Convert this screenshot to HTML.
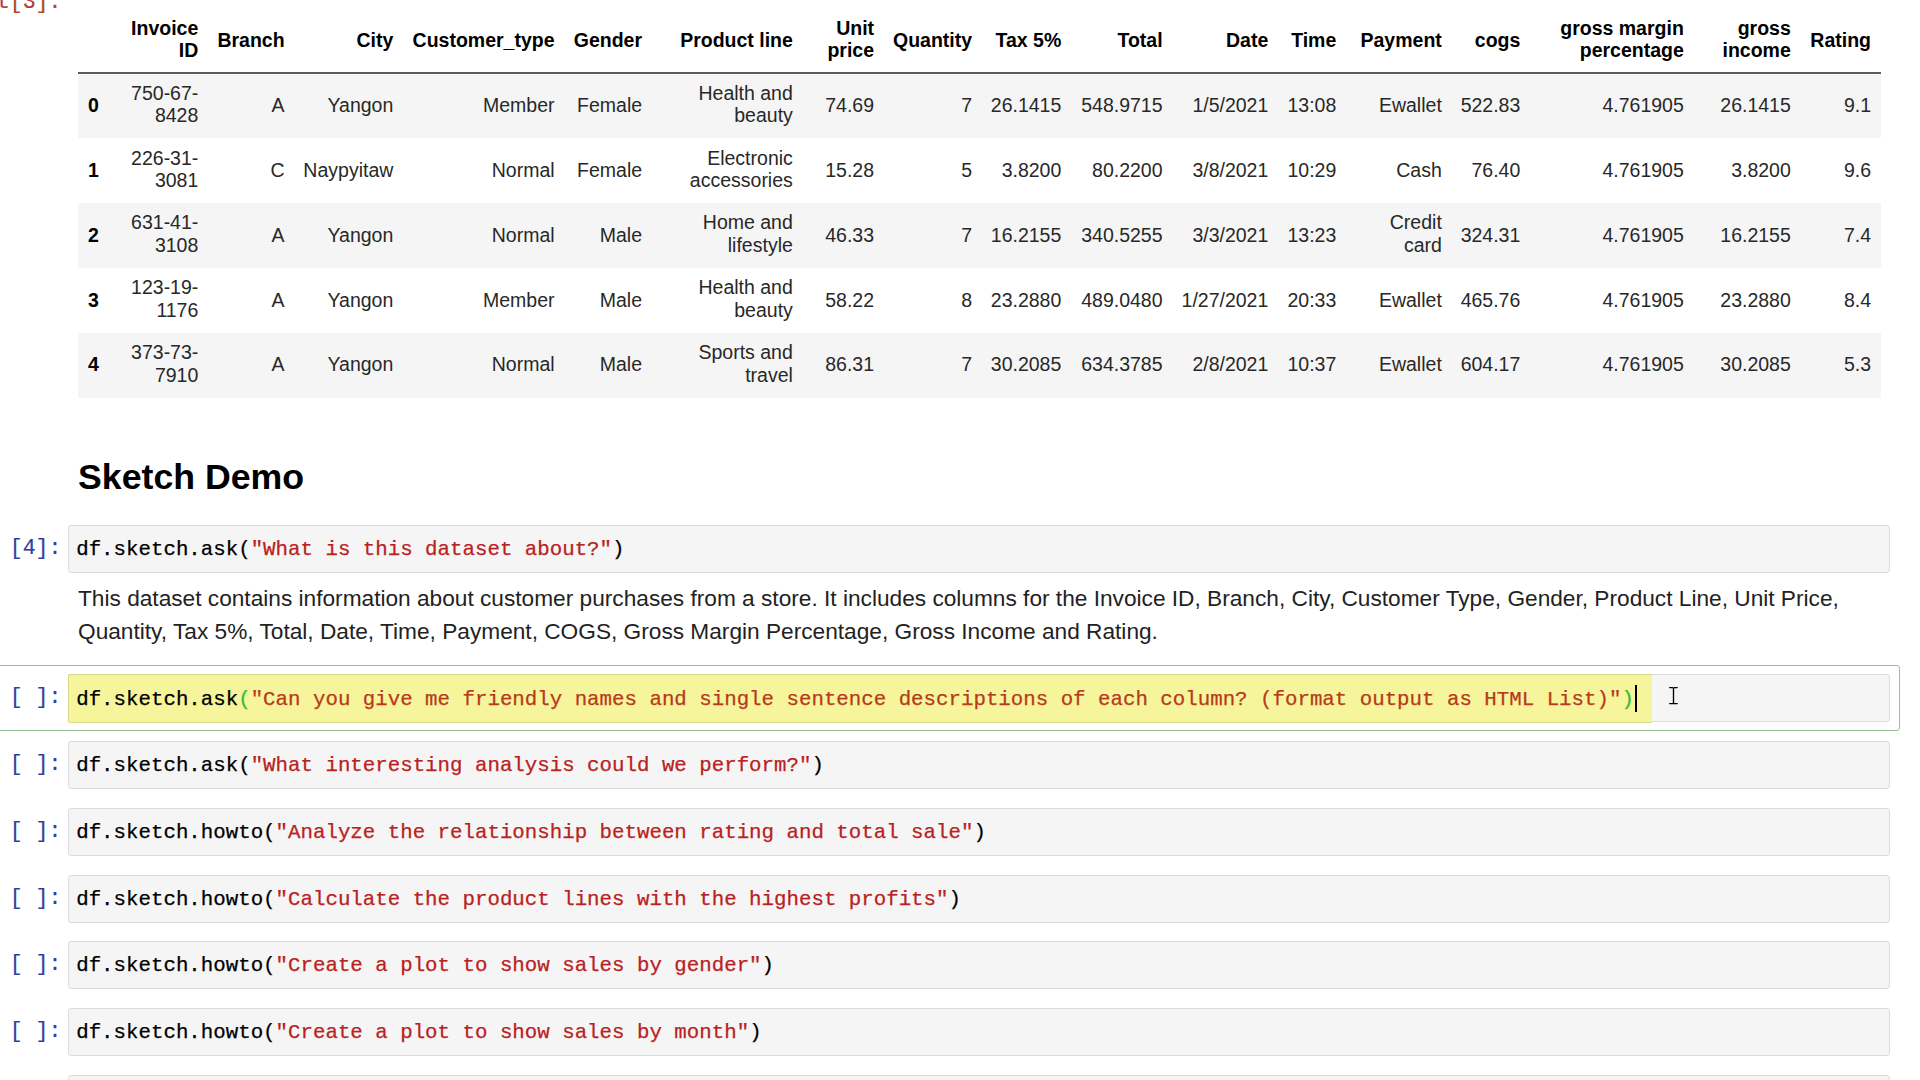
<!DOCTYPE html>
<html><head><meta charset="utf-8"><title>Sketch Demo</title>
<style>
html,body{margin:0;padding:0;background:#fff;width:1920px;height:1080px;overflow:hidden;position:relative}
body{font-family:"Liberation Sans",sans-serif;color:#000}
.c{position:absolute;font-size:19.5px;line-height:22.5px;white-space:nowrap;text-align:right;color:#282828}
.b{font-weight:bold;color:#000}
.rowbg{position:absolute;left:78px;width:1803px;background:#f5f5f5}
.hline{position:absolute;left:78px;width:1803px;top:72.4px;height:1.6px;background:#5c5c5c}
h2{position:absolute;margin:0;left:78px;top:457px;font-size:35.7px;line-height:41px;font-weight:bold;color:#000}
.prompt{position:absolute;right:1858.6px;height:47px;line-height:47px;font-family:"Liberation Mono",monospace;font-size:21.5px;-webkit-text-stroke:0.2px #303f9f;color:#303f9f;white-space:pre;text-align:right}
.outprompt{color:#c63d1c}
.box{position:absolute;left:68px;width:1820px;height:46px;border:1px solid #dcdcdc;border-radius:3px;background:#f5f5f5;box-sizing:content-box}
.code{position:absolute;left:7.2px;top:1px;line-height:46px;font-family:"Liberation Mono",monospace;font-size:20.78px;color:#000;white-space:pre;-webkit-text-stroke:0.25px currentColor}
.s{color:#ba2121}
.p{color:#000}
.mb{color:#33bb33}
.ys{color:#b63a1c}
.out{position:absolute;left:78px;top:582.4px;font-size:22.68px;line-height:32.4px;color:#222;width:1800px}
.active{position:absolute;left:-2px;top:665px;width:1900px;height:64px;border:1.6px solid #96bf98;border-radius:3px;box-sizing:content-box}
.yellow{position:absolute;left:68px;top:674px;width:1583px;height:47px;background:#f6f59b;border:1px solid #d9d888;border-right:none;border-radius:2px 0 0 2px;box-sizing:content-box}
.caret{position:absolute;left:1635.2px;top:685px;width:2.2px;height:26.8px;background:#000}
</style></head><body>
<div class="prompt outprompt" style="top:-20.8px">Out[3]:</div>
<div class="hline"></div>
<div class="c b" style="right:1721.70px;top:16.65px">Invoice<br>ID</div>
<div class="c b" style="right:1635.45px;top:28.90px">Branch</div>
<div class="c b" style="right:1526.70px;top:28.90px">City</div>
<div class="c b" style="right:1365.45px;top:28.90px">Customer_type</div>
<div class="c b" style="right:1277.95px;top:28.90px">Gender</div>
<div class="c b" style="right:1127.20px;top:28.90px">Product line</div>
<div class="c b" style="right:1045.95px;top:16.65px">Unit<br>price</div>
<div class="c b" style="right:947.95px;top:28.90px">Quantity</div>
<div class="c b" style="right:858.70px;top:28.90px">Tax 5%</div>
<div class="c b" style="right:757.45px;top:28.90px">Total</div>
<div class="c b" style="right:651.70px;top:28.90px">Date</div>
<div class="c b" style="right:583.70px;top:28.90px">Time</div>
<div class="c b" style="right:478.20px;top:28.90px">Payment</div>
<div class="c b" style="right:399.70px;top:28.90px">cogs</div>
<div class="c b" style="right:236.20px;top:16.65px">gross margin<br>percentage</div>
<div class="c b" style="right:129.20px;top:16.65px">gross<br>income</div>
<div class="c b" style="right:49.00px;top:28.90px">Rating</div>
<div class="rowbg" style="top:75px;height:62.6px"></div>
<div class="rowbg" style="top:202.60px;height:65px"></div>
<div class="rowbg" style="top:332.60px;height:65px"></div>
<div class="c b" style="left:88px;top:94.10px;text-align:left">0</div>
<div class="c" style="right:1721.70px;top:81.85px">750-67-<br>8428</div>
<div class="c" style="right:1635.45px;top:94.10px">A</div>
<div class="c" style="right:1526.70px;top:94.10px">Yangon</div>
<div class="c" style="right:1365.45px;top:94.10px">Member</div>
<div class="c" style="right:1277.95px;top:94.10px">Female</div>
<div class="c" style="right:1127.20px;top:81.85px">Health and<br>beauty</div>
<div class="c" style="right:1045.95px;top:94.10px">74.69</div>
<div class="c" style="right:947.95px;top:94.10px">7</div>
<div class="c" style="right:858.70px;top:94.10px">26.1415</div>
<div class="c" style="right:757.45px;top:94.10px">548.9715</div>
<div class="c" style="right:651.70px;top:94.10px">1/5/2021</div>
<div class="c" style="right:583.70px;top:94.10px">13:08</div>
<div class="c" style="right:478.20px;top:94.10px">Ewallet</div>
<div class="c" style="right:399.70px;top:94.10px">522.83</div>
<div class="c" style="right:236.20px;top:94.10px">4.761905</div>
<div class="c" style="right:129.20px;top:94.10px">26.1415</div>
<div class="c" style="right:49.00px;top:94.10px">9.1</div>
<div class="c b" style="left:88px;top:158.90px;text-align:left">1</div>
<div class="c" style="right:1721.70px;top:146.65px">226-31-<br>3081</div>
<div class="c" style="right:1635.45px;top:158.90px">C</div>
<div class="c" style="right:1526.70px;top:158.90px">Naypyitaw</div>
<div class="c" style="right:1365.45px;top:158.90px">Normal</div>
<div class="c" style="right:1277.95px;top:158.90px">Female</div>
<div class="c" style="right:1127.20px;top:146.65px">Electronic<br>accessories</div>
<div class="c" style="right:1045.95px;top:158.90px">15.28</div>
<div class="c" style="right:947.95px;top:158.90px">5</div>
<div class="c" style="right:858.70px;top:158.90px">3.8200</div>
<div class="c" style="right:757.45px;top:158.90px">80.2200</div>
<div class="c" style="right:651.70px;top:158.90px">3/8/2021</div>
<div class="c" style="right:583.70px;top:158.90px">10:29</div>
<div class="c" style="right:478.20px;top:158.90px">Cash</div>
<div class="c" style="right:399.70px;top:158.90px">76.40</div>
<div class="c" style="right:236.20px;top:158.90px">4.761905</div>
<div class="c" style="right:129.20px;top:158.90px">3.8200</div>
<div class="c" style="right:49.00px;top:158.90px">9.6</div>
<div class="c b" style="left:88px;top:223.70px;text-align:left">2</div>
<div class="c" style="right:1721.70px;top:211.45px">631-41-<br>3108</div>
<div class="c" style="right:1635.45px;top:223.70px">A</div>
<div class="c" style="right:1526.70px;top:223.70px">Yangon</div>
<div class="c" style="right:1365.45px;top:223.70px">Normal</div>
<div class="c" style="right:1277.95px;top:223.70px">Male</div>
<div class="c" style="right:1127.20px;top:211.45px">Home and<br>lifestyle</div>
<div class="c" style="right:1045.95px;top:223.70px">46.33</div>
<div class="c" style="right:947.95px;top:223.70px">7</div>
<div class="c" style="right:858.70px;top:223.70px">16.2155</div>
<div class="c" style="right:757.45px;top:223.70px">340.5255</div>
<div class="c" style="right:651.70px;top:223.70px">3/3/2021</div>
<div class="c" style="right:583.70px;top:223.70px">13:23</div>
<div class="c" style="right:478.20px;top:211.45px">Credit<br>card</div>
<div class="c" style="right:399.70px;top:223.70px">324.31</div>
<div class="c" style="right:236.20px;top:223.70px">4.761905</div>
<div class="c" style="right:129.20px;top:223.70px">16.2155</div>
<div class="c" style="right:49.00px;top:223.70px">7.4</div>
<div class="c b" style="left:88px;top:288.50px;text-align:left">3</div>
<div class="c" style="right:1721.70px;top:276.25px">123-19-<br>1176</div>
<div class="c" style="right:1635.45px;top:288.50px">A</div>
<div class="c" style="right:1526.70px;top:288.50px">Yangon</div>
<div class="c" style="right:1365.45px;top:288.50px">Member</div>
<div class="c" style="right:1277.95px;top:288.50px">Male</div>
<div class="c" style="right:1127.20px;top:276.25px">Health and<br>beauty</div>
<div class="c" style="right:1045.95px;top:288.50px">58.22</div>
<div class="c" style="right:947.95px;top:288.50px">8</div>
<div class="c" style="right:858.70px;top:288.50px">23.2880</div>
<div class="c" style="right:757.45px;top:288.50px">489.0480</div>
<div class="c" style="right:651.70px;top:288.50px">1/27/2021</div>
<div class="c" style="right:583.70px;top:288.50px">20:33</div>
<div class="c" style="right:478.20px;top:288.50px">Ewallet</div>
<div class="c" style="right:399.70px;top:288.50px">465.76</div>
<div class="c" style="right:236.20px;top:288.50px">4.761905</div>
<div class="c" style="right:129.20px;top:288.50px">23.2880</div>
<div class="c" style="right:49.00px;top:288.50px">8.4</div>
<div class="c b" style="left:88px;top:353.30px;text-align:left">4</div>
<div class="c" style="right:1721.70px;top:341.05px">373-73-<br>7910</div>
<div class="c" style="right:1635.45px;top:353.30px">A</div>
<div class="c" style="right:1526.70px;top:353.30px">Yangon</div>
<div class="c" style="right:1365.45px;top:353.30px">Normal</div>
<div class="c" style="right:1277.95px;top:353.30px">Male</div>
<div class="c" style="right:1127.20px;top:341.05px">Sports and<br>travel</div>
<div class="c" style="right:1045.95px;top:353.30px">86.31</div>
<div class="c" style="right:947.95px;top:353.30px">7</div>
<div class="c" style="right:858.70px;top:353.30px">30.2085</div>
<div class="c" style="right:757.45px;top:353.30px">634.3785</div>
<div class="c" style="right:651.70px;top:353.30px">2/8/2021</div>
<div class="c" style="right:583.70px;top:353.30px">10:37</div>
<div class="c" style="right:478.20px;top:353.30px">Ewallet</div>
<div class="c" style="right:399.70px;top:353.30px">604.17</div>
<div class="c" style="right:236.20px;top:353.30px">4.761905</div>
<div class="c" style="right:129.20px;top:353.30px">30.2085</div>
<div class="c" style="right:49.00px;top:353.30px">5.3</div>
<h2>Sketch Demo</h2>
<div class="prompt" style="top:525px">[4]:</div>
<div class="box" style="top:525px"><div class="code">df.sketch.ask<span class="p">(</span><span class="s">&quot;What is this dataset about?&quot;</span><span class="p">)</span></div></div>
<div class="out">This dataset contains information about customer purchases from a store. It includes columns for the Invoice ID, Branch, City, Customer Type, Gender, Product Line, Unit Price, Quantity, Tax 5%, Total, Date, Time, Payment, COGS, Gross Margin Percentage, Gross Income and Rating.</div>
<div class="active"></div>
<div class="prompt" style="top:674px">[ ]:</div>
<div class="box" style="top:674px;height:46px"></div>
<div class="yellow"></div>
<div class="code" style="left:76.2px;top:676.6px;position:absolute">df.sketch.ask<span class="mb">(</span><span class="ys">&quot;Can you give me friendly names and single sentence descriptions of each column? (format output as HTML List)&quot;</span><span class="mb">)</span></div>
<div class="caret"></div>
<svg style="position:absolute;left:1666px;top:686px" width="14" height="20" viewBox="0 0 14 20"><path d="M3.7 1.6H6.3Q7.5 1.6 7.5 2.8V16.4Q7.5 17.6 6.3 17.6H3.7M11.2 1.6H8.7Q7.5 1.6 7.5 2.8M7.5 16.4Q7.5 17.6 8.7 17.6H11.2" stroke="#000" stroke-width="1.35" fill="none" stroke-linecap="round"/></svg>
<div class="prompt" style="top:741.00px">[ ]:</div>
<div class="box" style="top:741.00px"><div class="code">df.sketch.ask<span class="p">(</span><span class="s">&quot;What interesting analysis could we perform?&quot;</span><span class="p">)</span></div></div>
<div class="prompt" style="top:808.00px">[ ]:</div>
<div class="box" style="top:808.00px"><div class="code">df.sketch.howto<span class="p">(</span><span class="s">&quot;Analyze the relationship between rating and total sale&quot;</span><span class="p">)</span></div></div>
<div class="prompt" style="top:875.00px">[ ]:</div>
<div class="box" style="top:875.00px"><div class="code">df.sketch.howto<span class="p">(</span><span class="s">&quot;Calculate the product lines with the highest profits&quot;</span><span class="p">)</span></div></div>
<div class="prompt" style="top:941.00px">[ ]:</div>
<div class="box" style="top:941.00px"><div class="code">df.sketch.howto<span class="p">(</span><span class="s">&quot;Create a plot to show sales by gender&quot;</span><span class="p">)</span></div></div>
<div class="prompt" style="top:1008.00px">[ ]:</div>
<div class="box" style="top:1008.00px"><div class="code">df.sketch.howto<span class="p">(</span><span class="s">&quot;Create a plot to show sales by month&quot;</span><span class="p">)</span></div></div>
<div class="prompt" style="top:1075.00px">[ ]:</div>
<div class="box" style="top:1075.00px"><div class="code"></div></div>
</body></html>
